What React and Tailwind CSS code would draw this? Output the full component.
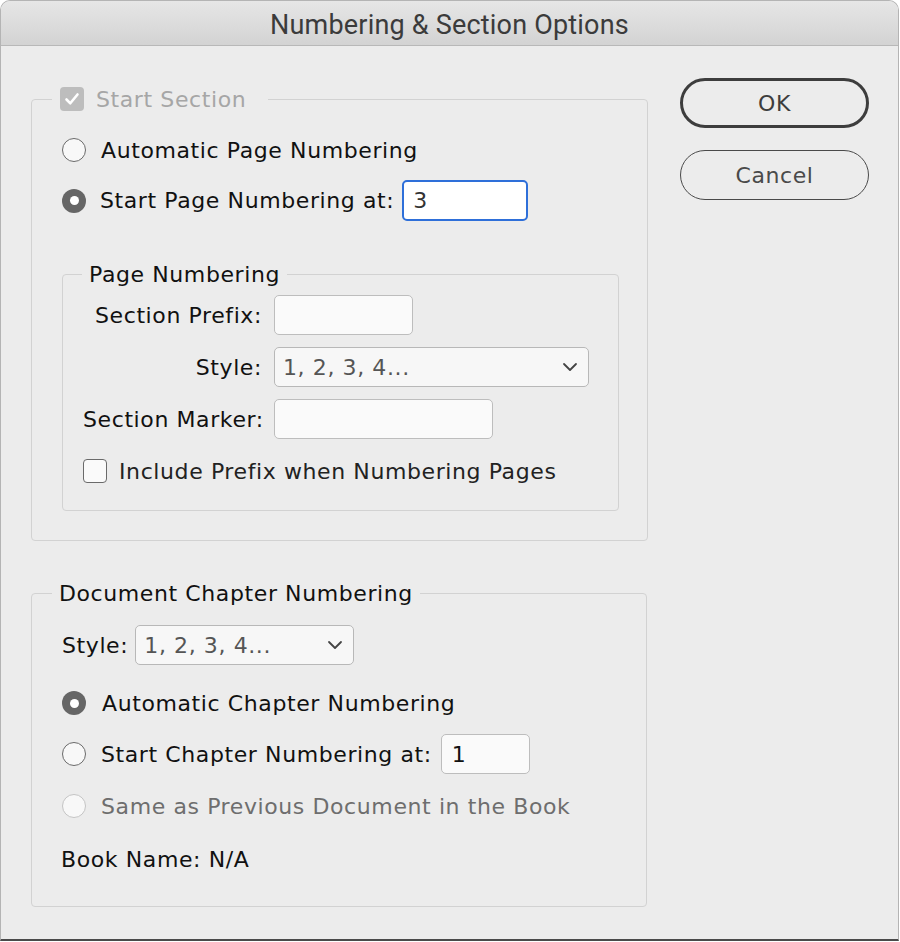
import React from 'react';

const font = { fontFamily: '"DejaVu Sans", "Liberation Sans", sans-serif' };

const Radio = ({ checked, disabled }) => {
  if (checked) {
    return (
      <span className="w-[24px] h-[24px] rounded-full bg-[#666666] flex items-center justify-center shrink-0">
        <span className="w-[9px] h-[9px] rounded-full bg-white" />
      </span>
    );
  }
  return (
    <span
      className={`w-[24px] h-[24px] rounded-full bg-[#f8f8f8] border-[1.5px] shrink-0 ${
        disabled ? 'border-[#c4c4c4]' : 'border-[#6a6a6a]'
      }`}
    />
  );
};

const Chevron = () => (
  <svg width="16" height="10" viewBox="0 0 16 10" fill="none">
    <path d="M2 2l6 6 6-6" stroke="#444" strokeWidth="1.8" strokeLinecap="round" strokeLinejoin="round" />
  </svg>
);

const Select = ({ width }) => (
  <div
    className={`${width} h-[40px] rounded-[5px] border-[1.5px] border-[#b8b8b8] bg-[#f7f7f7] flex items-center justify-between pl-[8px] pr-[10px] text-[#555]`}
  >
    <span>1, 2, 3, 4...</span>
    <Chevron />
  </div>
);

const TextBox = ({ width, children, className = '' }) => (
  <div
    className={`${width} h-[40px] rounded-[5px] border-[1.5px] border-[#bdbdbd] bg-[#fafafa] flex items-center pl-[10px] shrink-0 ${className}`}
  >
    {children}
  </div>
);

export default function App() {
  return (
    <div className="w-[900px] h-[942px] bg-white text-[22px] tracking-[0.6px] text-[#111] whitespace-nowrap" style={font}>
      <div className="w-[899px] h-[941px] rounded-t-[10px] border border-[#b4b4b4] border-b-[2px] border-b-[#4a4a4a] bg-[#ececec] overflow-hidden flex flex-col">
        {/* title bar */}
        <div className="h-[45px] shrink-0 bg-gradient-to-b from-[#e6e6e6] to-[#d3d3d3] border-b border-[#b8b8b8] flex items-center justify-center pt-[4px]">
          <span
            className="text-[27px] text-[#3b3b3b] tracking-[0.2px]"
            style={{ fontFamily: 'Roboto, "Liberation Sans", Arial, sans-serif' }}
          >
            Numbering &amp; Section Options
          </span>
        </div>

        <div className="flex">
          {/* left column */}
          <div className="pl-[30px] flex flex-col">
            {/* Start Section */}
            <fieldset className="mt-[39px] w-[616px] border border-[#d2d2d2] rounded-[4px] pl-[30px] pr-[28px] pb-[29px]">
              <legend className="-ml-[10px] px-[8px] h-[28px] flex items-center gap-[12px] text-[#a6a6a6]">
                <span className="w-[24px] h-[24px] rounded-[4px] bg-[#bdbdbd] flex items-center justify-center">
                  <svg width="16" height="14" viewBox="0 0 16 14" fill="none">
                    <path d="M2.5 7.5l3.8 3.8L13.5 2.5" stroke="white" strokeWidth="2.6" strokeLinecap="round" strokeLinejoin="round" />
                  </svg>
                </span>
                <span className="pr-[14px]">Start Section</span>
              </legend>

              <div className="mt-[21px] h-[32px] flex items-center gap-[15px]">
                <Radio />
                <span>Automatic Page Numbering</span>
              </div>
              <div className="mt-[14px] h-[41px] flex items-center">
                <Radio checked />
                <span className="ml-[14px]">Start Page Numbering at:</span>
                <div className="ml-[8px] w-[126px] h-[41px] rounded-[5px] border-[2px] border-[#2e6fd9] bg-white flex items-center pl-[9px] text-[#333]">
                  3
                </div>
              </div>

              {/* Page Numbering */}
              <fieldset className="mt-[39px] w-[557px] border border-[#d2d2d2] rounded-[4px] pl-[20px] pb-[27px]">
                <legend className="-ml-[1px] px-[7px] h-[28px] flex items-center">Page Numbering</legend>
                <div className="mt-[7px] flex items-center">
                  <span className="w-[179px] shrink-0 text-right">Section Prefix:</span>
                  <TextBox width="w-[139px]" className="ml-[12px]" />
                </div>
                <div className="mt-[12px] flex items-center">
                  <span className="w-[179px] shrink-0 text-right">Style:</span>
                  <div className="ml-[12px]">
                    <Select width="w-[315px]" />
                  </div>
                </div>
                <div className="mt-[12px] flex items-center">
                  <span className="w-[179px] shrink-0 text-right">Section Marker:</span>
                  <TextBox width="w-[219px]" className="ml-[12px]" />
                </div>
                <div className="mt-[20px] h-[24px] flex items-center gap-[12px]">
                  <span className="w-[24px] h-[24px] rounded-[4px] border-[1.5px] border-[#6a6a6a] bg-[#fafafa]" />
                  <span className="text-[#222]">Include Prefix when Numbering Pages</span>
                </div>
              </fieldset>
            </fieldset>

            {/* Document Chapter Numbering */}
            <fieldset className="mt-[38px] w-[616px] border border-[#d2d2d2] rounded-[4px] pl-[30px] pb-[33px]">
              <legend className="-ml-[10px] px-[7px] h-[28px] flex items-center">Document Chapter Numbering</legend>
              <div className="mt-[18px] flex items-center">
                <span>Style:</span>
                <div className="ml-[7px]">
                  <Select width="w-[219px]" />
                </div>
              </div>
              <div className="mt-[22px] h-[32px] flex items-center gap-[16px]">
                <Radio checked />
                <span>Automatic Chapter Numbering</span>
              </div>
              <div className="mt-[15px] h-[40px] flex items-center">
                <Radio />
                <span className="ml-[15px]">Start Chapter Numbering at:</span>
                <TextBox width="w-[89px]" className="ml-[9px]">1</TextBox>
              </div>
              <div className="mt-[16px] h-[32px] flex items-center gap-[15px] text-[#6e6e6e]">
                <Radio disabled />
                <span>Same as Previous Document in the Book</span>
              </div>
              <div className="mt-[23px] h-[28px] flex items-center -ml-[1px]">Book Name: N/A</div>
            </fieldset>
          </div>

          {/* right column */}
          <div className="ml-[32px] mt-[32px] flex flex-col gap-[22px]">
            <button className="w-[189px] h-[50px] rounded-full border-[3px] border-[#3d3d3d] text-[#3d3d3d] flex items-center justify-center">
              OK
            </button>
            <button className="w-[189px] h-[50px] rounded-full border-[1.5px] border-[#4a4a4a] text-[#4a4a4a] flex items-center justify-center">
              Cancel
            </button>
          </div>
        </div>
      </div>
    </div>
  );
}
